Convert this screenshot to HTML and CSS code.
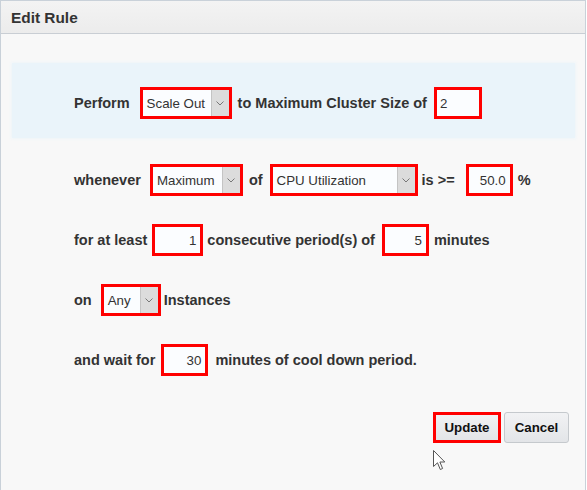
FILE: index.html
```html
<!DOCTYPE html>
<html>
<head>
<meta charset="utf-8">
<link rel="stylesheet" href="styles.css">
</head>
<body>
<div class="dialog">
  <div class="header"><span class="title">Edit Rule</span></div>
  <div class="content">
    <div class="band">
      <div class="row">
        <span class="lbl">Perform</span>
        <span class="hl sel ml10 w92"><span class="val">Scale Out</span><span class="arrow"><svg width="8" height="5" viewBox="0 0 8 5"><path d="M0.5 0.5 L4 4 L7.5 0.5" fill="none" stroke="#777" stroke-width="1"/></svg></span></span>
        <span class="lbl ml6">to Maximum Cluster Size of</span>
        <span class="hl inp left ml7 w48">2</span>
      </div>
    </div>

    <div class="row r2">
      <span class="lbl">whenever</span>
      <span class="hl sel ml9 w93"><span class="val">Maximum</span><span class="arrow"><svg width="8" height="5" viewBox="0 0 8 5"><path d="M0.5 0.5 L4 4 L7.5 0.5" fill="none" stroke="#777" stroke-width="1"/></svg></span></span>
      <span class="lbl ml6">of</span>
      <span class="hl sel ml7 w148"><span class="val">CPU Utilization</span><span class="arrow"><svg width="8" height="5" viewBox="0 0 8 5"><path d="M0.5 0.5 L4 4 L7.5 0.5" fill="none" stroke="#777" stroke-width="1"/></svg></span></span>
      <span class="lbl ml4">is &gt;=</span>
      <span class="hl inp ml11 w47">50.0</span>
      <span class="lbl ml5">%</span>
    </div>

    <div class="row rn">
      <span class="lbl">for at least</span>
      <span class="hl inp ml5 w51">1</span>
      <span class="lbl ml4">consecutive period(s) of</span>
      <span class="hl inp ml7 w47">5</span>
      <span class="lbl ml5">minutes</span>
    </div>

    <div class="row rn">
      <span class="lbl">on</span>
      <span class="hl sel ml9 w60"><span class="val">Any</span><span class="arrow"><svg width="8" height="5" viewBox="0 0 8 5"><path d="M0.5 0.5 L4 4 L7.5 0.5" fill="none" stroke="#777" stroke-width="1"/></svg></span></span>
      <span class="lbl ml3">Instances</span>
    </div>

    <div class="row rn">
      <span class="lbl">and wait for</span>
      <span class="hl inp ml6 w47">30</span>
      <span class="lbl ml7">minutes of cool down period.</span>
    </div>

    <div class="buttons">
      <button class="btn btn-hl">Update</button>
      <button class="btn btn-cancel">Cancel</button>
    </div>
  </div>
  <svg class="cursor" width="13" height="21" viewBox="0 0 13 21"><path d="M0.5 0.5 L0.5 16.5 L4.5 12.8 L7.3 19.5 L9.6 18.5 L6.9 12 L11.8 12 Z" fill="#fff" stroke="#555" stroke-width="1" stroke-linejoin="round"/></svg>
</div>
</body>
</html>
```

FILE: styles.css
```css
html, body {
  margin: 0;
  padding: 0;
  background: #ffffff;
}
body {
  font-family: "Liberation Sans", Arial, sans-serif;
  color: #333;
}
.dialog {
  position: relative;
  width: 584px;
  height: 489px;
  border: 1px solid #c9d1d9;
  border-bottom: none;
  background: #f8f8f8;
}
.header {
  height: 32px;
  border-bottom: 1px solid #c9ced4;
  background: linear-gradient(#f3f3f3, #ececec);
  display: flex;
  align-items: center;
  padding-left: 10px;
}
.title {
  font-weight: bold;
  font-size: 15.4px;
  color: #333;
  margin-top: 1px;
}
.content {
  display: flex;
  flex-direction: column;
}
.band {
  margin: 29px 0 0 11px;
  width: 563px;
  padding: 24px 0 19px 0;
  background: #eaf4fa;
  box-shadow: 0 0 3px 1px #eef5f9;
}
.band .row {
  padding-left: 62px;
}
.row {
  display: flex;
  align-items: center;
  height: 32px;
  padding-left: 73px;
}
.r2 { margin-top: 26px; }
.rn { margin-top: 28px; }
.lbl {
  font-weight: bold;
  font-size: 14.5px;
  color: #333;
  white-space: nowrap;
}
.hl {
  box-sizing: border-box;
  height: 32px;
  border: 3px solid #ff0000;
  background: #fbfdff;
  display: flex;
  align-items: center;
  font-size: 13.3px;
  color: #333;
  flex: none;
}
.sel .val {
  flex: 1;
  padding-left: 4px;
  white-space: nowrap;
  overflow: hidden;
}
.sel .arrow {
  width: 17px;
  align-self: stretch;
  background: #dcdcdc;
  border-left: 1px solid #c4c4c4;
  display: flex;
  align-items: center;
  justify-content: center;
}
.inp {
  justify-content: flex-end;
  padding-right: 4px;
}
.inp.left {
  justify-content: flex-start;
  padding-left: 3px;
}
.ml3 { margin-left: 3px; }
.ml4 { margin-left: 4px; }
.ml5 { margin-left: 5px; }
.ml6 { margin-left: 6px; }
.ml7 { margin-left: 7px; }
.ml9 { margin-left: 9px; }
.ml10 { margin-left: 10px; }
.ml11 { margin-left: 11px; }
.w47 { width: 47px; }
.w48 { width: 48px; }
.w51 { width: 51px; }
.w60 { width: 60px; }
.w92 { width: 92px; }
.w93 { width: 93px; }
.w148 { width: 148px; }
.buttons {
  display: flex;
  justify-content: flex-end;
  gap: 3px;
  margin-top: 36px;
  padding-right: 16px;
}
.btn {
  box-sizing: border-box;
  height: 31px;
  font-family: "Liberation Sans", Arial, sans-serif;
  font-weight: bold;
  font-size: 13.3px;
  color: #111;
  background: linear-gradient(#f1f2f4, #e3e5e8);
  padding: 0;
  margin: 0;
}
.btn-hl {
  width: 68px;
  border: 3px solid #ff0000;
  border-radius: 0;
}
.btn-cancel {
  width: 65px;
  border: 1px solid #c5c9cd;
  border-radius: 3px;
}
.cursor {
  position: absolute;
  left: 432px;
  top: 449px;
}
```
